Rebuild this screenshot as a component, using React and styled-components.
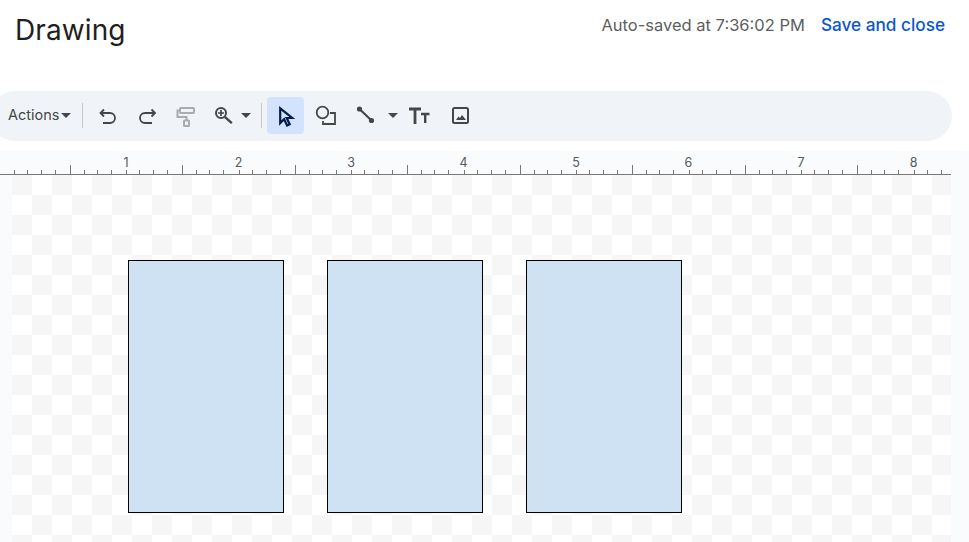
import React from 'react'
import styled, { createGlobalStyle } from 'styled-components'

const GlobalStyle = createGlobalStyle`
  html, body {
    margin: 0;
    padding: 0;
    background: #f9fbfd;
  }
  body {
    font-family: Roboto, "Liberation Sans", sans-serif;
    overflow: hidden;
  }
`

const Page = styled.div`
  width: 969px;
  height: 542px;
  overflow: hidden;
  display: flex;
  flex-direction: column;
`

const Header = styled.header`
  height: 91px;
  flex: none;
  background: #fff;
  display: flex;
  align-items: flex-start;
  justify-content: space-between;
  padding: 0 24px 0 15px;
  box-sizing: border-box;
`

const Title = styled.h1`
  margin: 13px 0 0;
  font-family: Inter, sans-serif;
  font-size: 28px;
  line-height: 34px;
  font-weight: 400;
  letter-spacing: 0.1px;
  color: #1f1f1f;
`

const HeaderRight = styled.div`
  display: flex;
  align-items: center;
  gap: 16px;
  margin-top: 15px;
  font-family: Inter, sans-serif;
  line-height: 20px;
`

const SavedNote = styled.span`
  font-size: 16.5px;
  color: #5e5e5e;
`

const SaveLink = styled.a`
  font-size: 17.2px;
  color: #0b57d0;
  font-weight: 500;
`

const ToolbarGap = styled.div`
  flex: none;
  background: #fff;
`

const Toolbar = styled.div`
  width: 962px;
  height: 50px;
  margin-left: -10px;
  margin-bottom: 10px;
  padding: 0 0 1px 18px;
  box-sizing: border-box;
  border-radius: 25px;
  background: #f0f4f9;
  display: flex;
  align-items: center;
`

const ActionsLabel = styled.span`
  margin-top: -1px;
  font-family: Inter, sans-serif;
  font-size: 14.5px;
  line-height: 18px;
  color: #444746;
`

const Caret = styled.span`
  flex: none;
  width: 0;
  height: 0;
  margin-left: ${p => p.$left || 0}px;
  border-left: 5px solid transparent;
  border-right: 5px solid transparent;
  border-top: 5px solid #444746;
`

const Separator = styled.span`
  flex: none;
  width: 1px;
  height: 25px;
  margin-left: ${p => p.$left}px;
  background: #c7c7c7;
`

const ToolButton = styled.button`
  flex: none;
  width: ${p => p.$width || 38}px;
  height: 37px;
  margin-left: ${p => p.$left || 0}px;
  padding: 0;
  border: 0;
  border-radius: 4px;
  background: ${p => (p.$active ? '#d3e3fd' : 'transparent')};
  color: ${p => (p.$active ? '#041e49' : '#444746')};
  display: flex;
  align-items: center;
  justify-content: center;

  &:disabled {
    color: #a9abac;
  }
`

const Ruler = styled.svg`
  display: block;
  flex: none;
  width: 969px;
  height: 24px;
  opacity: 0.99;
`

const RulerNumber = styled.text`
  font-family: Inter, sans-serif;
  font-size: 12.5px;
  fill: #55585b;
  text-anchor: middle;
`

const Canvas = styled.div`
  flex: 1;
  width: 939px;
  margin-left: 12px;
  padding: 85px 0 0 116px;
  box-sizing: border-box;
  display: flex;
  align-items: flex-start;
  gap: 43px;
  background-color: #fff;
  background-image: conic-gradient(#fff 25%, #f6f6f6 0 50%, #fff 0 75%, #f6f6f6 0);
  background-size: 40px 40px;
`

const Rectangle = styled.div`
  width: 156px;
  height: 253px;
  box-sizing: border-box;
  border: 1px solid #000;
  background: #cfe2f3;
`

const Icon = ({ children, w = 20, h = 20 }) => (
  <svg width={w} height={h} viewBox={`0 0 ${w} ${h}`} fill="none" stroke="currentColor" strokeWidth="1.8">
    {children}
  </svg>
)

const UndoIcon = () => (
  <Icon>
    <path d="M6 3.5 2.5 7 6 10.5" />
    <path d="M2.5 7H12a5 5 0 0 1 0 10H5" />
  </Icon>
)

const RedoIcon = () => (
  <Icon>
    <path d="M14.5 3.5 18 7l-3.5 3.5" />
    <path d="M17.5 7H8a5 5 0 0 0 0 10h7" />
  </Icon>
)

const RollerIcon = () => (
  <Icon h={22}>
    <rect x="5" y="3" width="14" height="5" rx="0.8" strokeWidth="2" />
    <path d="M5 5.5H2.5V12h9v3.5" strokeWidth="2" />
    <rect x="9" y="15.5" width="5" height="5.5" rx="0.6" strokeWidth="2" />
  </Icon>
)

const ZoomIcon = () => (
  <Icon>
    <circle cx="8" cy="7" r="5" strokeWidth="2" />
    <path d="m11.8 10.8 7 6.4" strokeWidth="2.4" />
    <path d="M8 4v6M5 7h6" strokeWidth="1.7" />
  </Icon>
)

const CursorIcon = () => (
  <Icon w={18} h={22}>
    <path d="M3.2 3.4V18l3.9-3.9 3 6.4 2.6-1.2-3-6.3h5.5Z" strokeWidth="2.2" strokeLinejoin="miter" />
  </Icon>
)

const ShapeIcon = () => (
  <Icon w={22} h={22}>
    <circle cx="7.5" cy="7.5" r="5.8" />
    <path d="M15 8h5v11H8v-3" />
  </Icon>
)

const LineIcon = () => (
  <Icon>
    <path d="M3.5 3 15.5 14.5" strokeWidth="2.2" />
    <circle cx="3.5" cy="3" r="2.6" fill="currentColor" stroke="none" />
    <circle cx="15.5" cy="14.5" r="2.6" fill="currentColor" stroke="none" />
  </Icon>
)

const TextSizeIcon = () => (
  <Icon w={22} h={18}>
    <path d="M1 2h12M7 2v15" strokeWidth="2.8" />
    <path d="M13 7h8.5M17.2 7v9" strokeWidth="2.4" />
  </Icon>
)

const ImageIcon = () => (
  <Icon>
    <rect x="3" y="2" width="15" height="15" rx="1.5" strokeWidth="2" />
    <path d="m6 14 2.5-3.5 1.5 1.5 2-3 4 5Z" fill="currentColor" stroke="none" />
  </Icon>
)

// the eighth-inch ticks do not land on even pixels, so nudge them by hand
const nudge = [0, -1, -1, -1, 0, 0, -1, -1]
const ticks = Array.from({ length: 67 }, (_, i) => {
  const x = Math.floor(14 + i * 14.0625) + nudge[i % 8]
  return { x, long: i % 8 === 4 }
})
const inches = [1, 2, 3, 4, 5, 6, 7, 8]

export default function App () {
  return (
    <Page>
      <GlobalStyle />
      <Header>
        <Title>Drawing</Title>
        <HeaderRight>
          <SavedNote>Auto-saved at 7:36:02 PM</SavedNote>
          <SaveLink>Save and close</SaveLink>
        </HeaderRight>
      </Header>
      <ToolbarGap>
        <Toolbar>
          <ActionsLabel>Actions</ActionsLabel>
          <Caret $left={2} />
          <Separator $left={11} />
          <ToolButton $left={6}><UndoIcon /></ToolButton>
          <ToolButton $left={1}><RedoIcon /></ToolButton>
          <ToolButton disabled><RollerIcon /></ToolButton>
          <ToolButton><ZoomIcon /></ToolButton>
          <Caret $left={-1} />
          <Separator $left={10} />
          <ToolButton $active $width={37} $left={5}><CursorIcon /></ToolButton>
          <ToolButton $left={3}><ShapeIcon /></ToolButton>
          <ToolButton $left={2}><LineIcon /></ToolButton>
          <Caret $left={3} />
          <ToolButton $left={2}><TextSizeIcon /></ToolButton>
          <ToolButton $left={3}><ImageIcon /></ToolButton>
        </Toolbar>
      </ToolbarGap>
      <Ruler viewBox="0 0 969 24">
        <rect x="0" y="23" width="951" height="1" fill="#777" />
        {ticks.map(t => (
          <rect key={t.x} x={t.x} y={t.long ? 14 : 19} width="1" height={t.long ? 9 : 4} fill="#777" />
        ))}
        {inches.map(n => (
          <RulerNumber key={n} x={13.5 + n * 112.5} y={16}>{n}</RulerNumber>
        ))}
      </Ruler>
      <Canvas>
        <Rectangle />
        <Rectangle />
        <Rectangle />
      </Canvas>
    </Page>
  )
}
